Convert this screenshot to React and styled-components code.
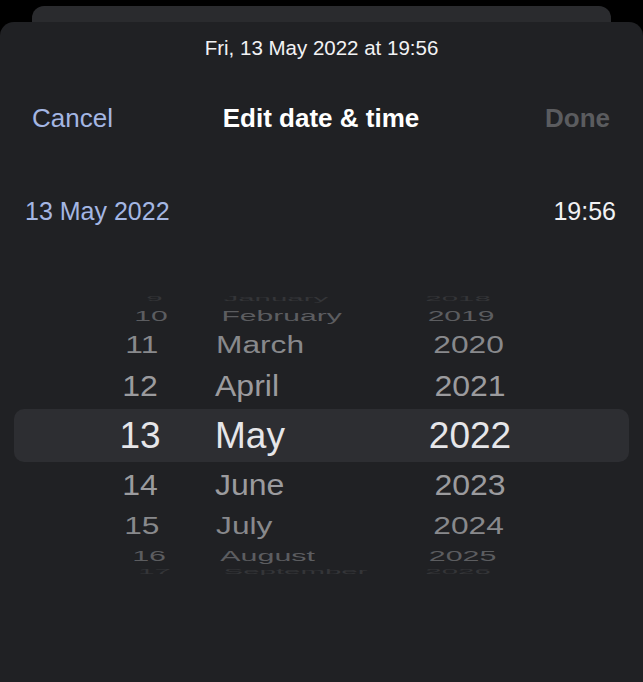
import React from "react";
import styled, { createGlobalStyle } from "styled-components";

const GlobalStyle = createGlobalStyle`
  html, body {
    margin: 0;
    padding: 0;
    background: #000;
    font-family: "Liberation Sans", Helvetica, Arial, sans-serif;
    -webkit-font-smoothing: antialiased;
  }
`;

const Page = styled.div`
  padding-top: 6px;
  min-height: 100vh;
  box-sizing: border-box;
  display: flex;
  flex-direction: column;
`;

const BackCard = styled.div`
  height: 16px;
  margin: 0 32px;
  background: #2a2b2e;
  border-radius: 12px 12px 0 0;
`;

const Sheet = styled.div`
  flex: 1;
  background: #202124;
  border-radius: 14px 14px 0 0;
  padding-top: 14px;
  display: flex;
  flex-direction: column;
`;

const Summary = styled.div`
  text-align: center;
  color: #f2f2f4;
  font-size: 20.5px;
  line-height: 24px;
`;

const Nav = styled.div`
  display: grid;
  grid-template-columns: 1fr auto 1fr;
  align-items: center;
  margin-top: 38px;
  padding: 0 33px 0 32px;
  height: 40px;
  font-size: 26px;
`;

const NavButton = styled.span`
  color: ${p => (p.$disabled ? "#5b5c5f" : "#a4b6e3")};
  font-weight: ${p => (p.$disabled ? "bold" : "normal")};
  justify-self: ${p => p.$align};
`;

const Title = styled.span`
  color: #fff;
  font-weight: bold;
`;

const ValueRow = styled.div`
  display: flex;
  justify-content: space-between;
  align-items: center;
  margin-top: 58px;
  padding: 0 27px 0 25px;
  height: 30px;
  font-size: 25px;
`;

const DateValue = styled.span`
  color: #a4b6e3;
`;

const TimeValue = styled.span`
  color: #f2f2f4;
`;

const Wheel = styled.div`
  margin-top: 66px;
  display: flex;
  flex-direction: column;
  overflow: hidden;
`;

const WheelRow = styled.div`
  display: grid;
  grid-template-columns: 80px 170px 100px;
  column-gap: 35px;
  align-items: center;
  padding-left: 86px;
  margin: 0 14px;
  height: ${p => p.$h}px;
  border-radius: 10px;
  background: ${p => (p.$selected ? "#2d2e32" : "transparent")};
  color: ${p => p.$color};
  font-size: ${p => (p.$selected ? 37 : 32)}px;
  line-height: 1;
  white-space: nowrap;
  transform: scale(${p => p.$sx}, ${p => p.$sy});
`;

const Day = styled.span`
  text-align: center;
`;

const Month = styled.span`
  text-align: left;
`;

const Year = styled.span`
  text-align: center;
`;

const rows = [
  { d: "9", m: "January", y: "2018", h: 9, sx: 0.92, sy: 0.2, c: "#343538" },
  { d: "10", m: "February", y: "2019", h: 26, sx: 0.94, sy: 0.47, c: "#5c5d60" },
  { d: "11", m: "March", y: "2020", h: 36, sx: 0.99, sy: 0.76, c: "#88898c" },
  { d: "12", m: "April", y: "2021", h: 46, sx: 1, sy: 0.92, c: "#9b9b9e" },
  { d: "13", m: "May", y: "2022", h: 53, sx: 1, sy: 1, c: "#e6e6e9", selected: true },
  { d: "14", m: "June", y: "2023", h: 46, sx: 1, sy: 0.9, c: "#9b9b9e" },
  { d: "15", m: "July", y: "2024", h: 35, sx: 0.99, sy: 0.75, c: "#88898c" },
  { d: "16", m: "August", y: "2025", h: 22, sx: 0.95, sy: 0.45, c: "#5c5d60" },
  { d: "17", m: "September", y: "2026", h: 10, sx: 0.92, sy: 0.2, c: "#343538" },
];

export default function App() {
  return (
    <Page>
      <GlobalStyle />
      <BackCard />
      <Sheet>
        <Summary>Fri, 13 May 2022 at 19:56</Summary>
        <Nav>
          <NavButton $align="start">Cancel</NavButton>
          <Title>Edit date &amp; time</Title>
          <NavButton $align="end" $disabled>
            Done
          </NavButton>
        </Nav>
        <ValueRow>
          <DateValue>13 May 2022</DateValue>
          <TimeValue>19:56</TimeValue>
        </ValueRow>
        <Wheel>
          {rows.map(r => (
            <WheelRow
              key={r.d}
              $h={r.h}
              $sx={r.sx}
              $sy={r.sy}
              $color={r.c}
              $selected={r.selected}
            >
              <Day>{r.d}</Day>
              <Month>{r.m}</Month>
              <Year>{r.y}</Year>
            </WheelRow>
          ))}
        </Wheel>
      </Sheet>
    </Page>
  );
}
